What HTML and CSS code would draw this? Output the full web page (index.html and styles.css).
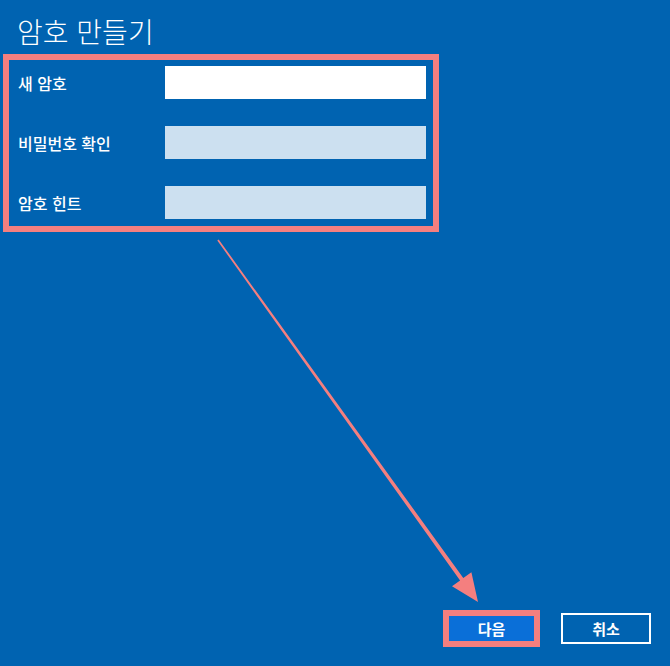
FILE: index.html
```html
<!DOCTYPE html>
<html lang="ko">
<head>
<meta charset="utf-8">
<title>암호 만들기</title>
<link rel="stylesheet" href="styles.css">
</head>
<body>
<div class="page">
  <h1 class="title">암호 만들기</h1>
  <div class="form-box">
    <label class="label" for="pw">새 암호</label>
    <input class="field field-active" id="pw" type="password">
    <label class="label" for="pw2">비밀번호 확인</label>
    <input class="field" id="pw2" type="password">
    <label class="label" for="hint">암호 힌트</label>
    <input class="field" id="hint" type="text">
  </div>
  <div class="footer">
    <div class="highlight">
      <button class="btn btn-primary" type="button">다음</button>
    </div>
    <button class="btn btn-secondary" type="button">취소</button>
  </div>
</div>
<svg class="arrow" width="670" height="666" viewBox="0 0 670 666" aria-hidden="true">
  <polygon points="218.7,239.5 463.3,578.1 471.4,572.3 478,602 452,586.3 460.1,580.5 217.3,240.5" fill="#f47f7f"/>
</svg>
</body>
</html>
```
FILE: styles.css
```css
html, body {
  margin: 0;
  padding: 0;
}
body {
  background: #0063b1;
  font-family: "Noto Sans CJK KR", "Noto Sans", sans-serif;
  color: #ffffff;
  width: 670px;
  height: 666px;
  overflow: hidden;
  position: relative;
}
.page {
  display: flex;
  flex-direction: column;
  height: 666px;
}
.title {
  margin: 0;
  padding: 14px 17px 0;
  height: 54px;
  box-sizing: border-box;
  font-size: 28px;
  line-height: 34px;
  font-weight: 300;
}
.form-box {
  margin-left: 3px;
  width: 436px;
  box-sizing: border-box;
  border: 6px solid #f47f7f;
  padding: 6px 7px 7px 9px;
  display: grid;
  grid-template-columns: 147px 261px;
  grid-auto-rows: 33px;
  row-gap: 27px;
  align-items: center;
}
.label {
  font-size: 16px;
  font-weight: 500;
  line-height: 20px;
}
.field {
  width: 261px;
  height: 33px;
  box-sizing: border-box;
  border: none;
  margin: 0;
  padding: 0 8px;
  background: #cce0f0;
  outline: none;
}
.field-active {
  background: #ffffff;
}
.footer {
  margin-top: auto;
  display: flex;
  justify-content: flex-end;
  align-items: center;
  gap: 21px;
  padding: 0 19px 19px 0;
}
.highlight {
  border: 6px solid #f47f7f;
  display: flex;
}
.btn {
  font-family: "Noto Sans CJK KR", "Noto Sans", sans-serif;
  font-size: 15px;
  font-weight: 700;
  color: #ffffff;
  margin: 0;
  padding: 0;
  box-sizing: border-box;
  cursor: pointer;
}
.btn-primary {
  width: 85px;
  height: 25px;
  background: #0a6fd8;
  border: none;
}
.btn-secondary {
  width: 90px;
  height: 31px;
  background: transparent;
  border: 2px solid #ffffff;
}
.arrow {
  position: absolute;
  left: 0;
  top: 0;
  pointer-events: none;
}
```
